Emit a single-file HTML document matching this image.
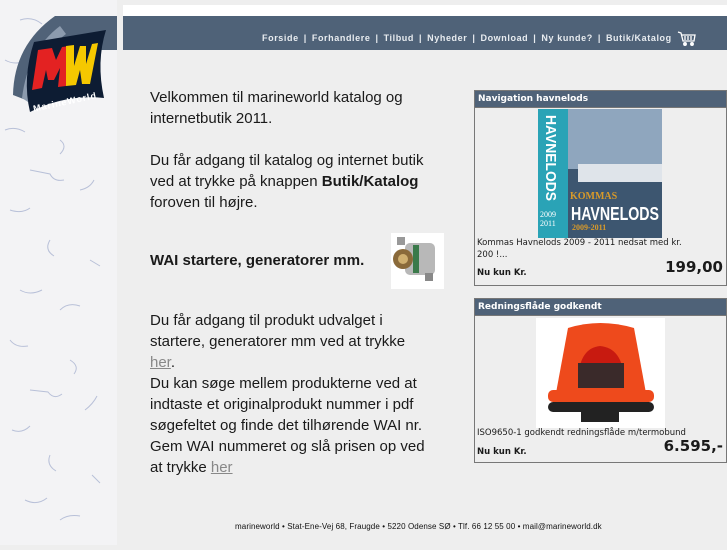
<!DOCTYPE html>
<html><head><meta charset="utf-8"><style>
*{margin:0;padding:0;box-sizing:border-box}
body{width:727px;height:545px;background:#eeeeee;position:relative;overflow:hidden;font-family:"Liberation Sans",sans-serif;color:#1a1a1a}
.abs{position:absolute}
#strip{left:0;top:0;width:117px;height:545px;background:#f3f3f5}
#white{left:123px;top:5px;width:604px;height:11px;background:#fff}
#bar{left:123px;top:16px;width:604px;height:34px;background:#4f6278}
#nav{left:262px;top:33px;font-size:9px;font-weight:bold;color:#e8ecf0;white-space:nowrap;letter-spacing:0.6px}
#nav span{margin:0 5px}
.t{left:150px;font-size:15px;line-height:21px;white-space:nowrap}
.t a{color:#888;text-decoration:underline}
.box{left:474px;width:253px;border:1px solid #777;background:#eee}
.hd{background:#4f6278;color:#fff;font-family:"DejaVu Sans",sans-serif;font-weight:bold;font-size:9px;height:17px;line-height:16px;padding-left:3px;border-bottom:1px solid #777}
.cap{font-family:"DejaVu Sans",sans-serif;font-size:8.5px;line-height:12px;padding-left:2px}
.nu{font-family:"DejaVu Sans",sans-serif;font-weight:bold;font-size:8.5px;position:absolute;left:2px}
.pr{font-family:"DejaVu Sans",sans-serif;font-weight:bold;font-size:15px;position:absolute;right:3px}
#foot{left:235px;top:522px;font-size:8px;color:#111;white-space:nowrap;letter-spacing:0.1px}
</style></head><body>
<div class="abs" id="strip">
<svg width="117" height="545" viewBox="0 0 117 545" fill="none" stroke="#b8c0d8" stroke-width="1">
<path d="M5 130 q10 -4 20 2 M60 140 q8 6 0 14 M30 170 l20 4 q4 8 14 6 M80 190 q10 -2 14 -10 M10 210 q12 4 20 -2 M50 240 q-6 10 4 16 M90 260 l10 6 M20 290 q10 6 22 0 M60 310 q8 -8 20 -4 M10 340 q6 8 18 6 M70 360 q10 6 4 14 M30 390 l18 2 q6 8 14 2 M85 410 q8 -6 12 -14 M12 430 q10 4 18 -4 M50 455 q-4 10 6 16 M92 475 l8 8 M25 500 q12 6 22 -2 M60 520 q8 -6 20 -4 M5 60 q10 6 24 0 M20 20 q12 -4 22 4"/>
</svg></div>
<div class="abs" id="white"></div>
<div class="abs" id="bar"></div>
<svg class="abs" style="left:0;top:0" width="120" height="120" viewBox="0 0 120 120">
<path d="M55 16 L117 16 L117 50 L70 50 Q36 60 26 100 L13 95 Q14 45 55 16Z" fill="#506278"/>
<path d="M60 26 Q28 50 22 98 L28 102 Q34 58 66 34Z" fill="#8c9bae"/>
<path d="M34 42 Q70 36 106 30 Q96 62 104 98 Q66 94 30 112 Q22 78 34 42Z" fill="#0d1c33"/>
<path d="M38 50 L52 48 L56 60 L62 47 L70 46 L66 86 L58 87 L60 68 L54 80 L48 80 L46 70 L42 88 L32 90Z" fill="#e32222"/>
<path d="M66 46 L74 45 L74 66 L80 46 L86 46 L86 64 L92 44 L98 43 L90 84 L82 84 L80 70 L76 85 L66 86Z" fill="#f5c800"/>
<text x="32" y="106" font-family="Liberation Sans" font-weight="bold" font-size="9" fill="#fff" transform="rotate(-12 60 100)" textLength="64">MarineWorld</text>
</svg>
<div class="abs" id="nav">Forside<span>|</span>Forhandlere<span>|</span>Tilbud<span>|</span>Nyheder<span>|</span>Download<span>|</span>Ny kunde?<span>|</span>Butik/Katalog</div>
<svg class="abs" style="left:677px;top:31px" width="20" height="16" viewBox="0 0 20 16" fill="none" stroke="#fff" stroke-width="1.3"><path d="M1 1 L4 2 L6 10 L17 10 L18 4 L5 4"/><path d="M8 5 v4 M11 5 v4 M14 5 v4"/><circle cx="8" cy="13" r="1.3" fill="#fff"/><circle cx="15" cy="13" r="1.3" fill="#fff"/></svg>

<div class="abs t" style="top:87px">Velkommen til marineworld katalog og<br>internetbutik 2011.</div>
<div class="abs t" style="top:150px">Du får adgang til katalog og internet butik<br>ved at trykke på knappen <b>Butik/Katalog</b><br>foroven til højre.</div>
<div class="abs t" style="top:250px"><b>WAI startere, generatorer mm.</b></div>
<svg class="abs" style="left:391px;top:233px" width="53" height="56" viewBox="0 0 53 56"><rect width="53" height="56" fill="#fff"/><rect x="14" y="10" width="30" height="32" rx="5" fill="#b8b8b8"/><rect x="22" y="12" width="6" height="28" fill="#3a7a4a"/><circle cx="12" cy="26" r="10" fill="#8a6a3a"/><circle cx="12" cy="26" r="5" fill="#d0b070"/><rect x="6" y="4" width="8" height="8" fill="#999"/><rect x="34" y="40" width="8" height="8" fill="#888"/></svg>
<div class="abs t" style="top:310px">Du får adgang til produkt udvalget i<br>startere, generatorer mm ved at trykke<br><a>her</a>.<br>Du kan søge mellem produkterne ved at<br>indtaste et originalprodukt nummer i pdf<br>søgefeltet og finde det tilhørende WAI nr.<br>Gem WAI nummeret og slå prisen op ved<br>at trykke <a>her</a></div>

<div class="abs box" style="top:90px;height:196px">
<div class="hd">Navigation havnelods</div>
<svg style="position:absolute;left:63px;top:18px" width="124" height="129" viewBox="0 0 124 129"><rect width="124" height="129" fill="#6f8aa8"/><rect y="0" width="124" height="60" fill="#8fa6be"/><rect y="60" width="124" height="69" fill="#3d5670"/><rect x="40" y="55" width="84" height="18" fill="#dfe4ea"/><rect width="30" height="129" fill="#2aa3b6"/><text x="8" y="6" transform="rotate(90 8 6)" font-family="Liberation Sans" font-weight="bold" font-size="15" fill="#fff" textLength="86" lengthAdjust="spacingAndGlyphs">HAVNELODS</text><text x="2" y="108" font-family="Liberation Serif" font-size="8" fill="#fff">2009</text><text x="2" y="117" font-family="Liberation Serif" font-size="8" fill="#fff">2011</text><text x="32" y="90" font-family="Liberation Serif" font-weight="bold" font-size="10" fill="#d89a2a">KOMMAS</text><text x="33" y="111" font-family="Liberation Sans" font-weight="bold" font-size="18" fill="#fff" textLength="88" lengthAdjust="spacingAndGlyphs">HAVNELODS</text><text x="34" y="121" font-family="Liberation Serif" font-weight="bold" font-size="8" fill="#d89a2a">2009-2011</text></svg>
<div class="cap" style="position:absolute;top:146px">Kommas Havnelods 2009 - 2011 nedsat med kr.<br>200 !...</div>
<div class="nu" style="top:177px">Nu kun Kr.</div>
<div class="pr" style="top:167px">199,00</div>
</div>

<div class="abs box" style="top:298px;height:165px">
<div class="hd">Redningsflåde godkendt</div>
<svg style="position:absolute;left:61px;top:19px" width="129" height="110" viewBox="0 0 129 110"><rect width="129" height="110" fill="#fff"/><path d="M20 75 L32 10 Q64 0 98 10 L110 75Z" fill="#ee4a1c"/><path d="M42 60 Q44 30 64 28 Q86 30 88 60Z" fill="#c81a10"/><rect x="42" y="45" width="46" height="25" fill="#3a2a2a"/><rect x="12" y="72" width="106" height="12" rx="5" fill="#ee4a1c"/><rect x="12" y="84" width="106" height="10" rx="5" fill="#222"/><rect x="45" y="92" width="38" height="12" fill="#222"/></svg>
<div class="cap" style="position:absolute;top:128px">ISO9650-1 godkendt redningsflåde m/termobund</div>
<div class="nu" style="top:148px">Nu kun Kr.</div>
<div class="pr" style="top:138px">6.595,-</div>
</div>

<div class="abs" id="foot">marineworld • Stat-Ene-Vej 68, Fraugde • 5220 Odense SØ • Tlf. 66 12 55 00 • mail@marineworld.dk</div>
</body></html>
